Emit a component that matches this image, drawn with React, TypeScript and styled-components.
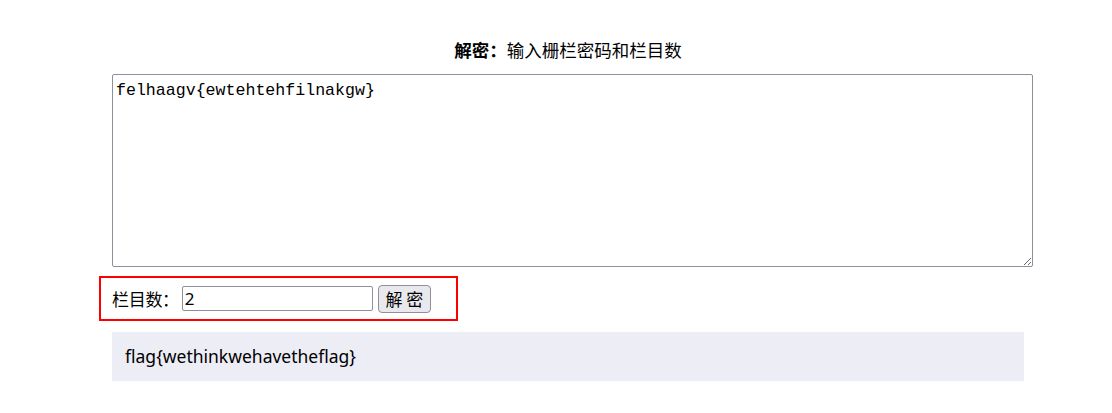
import React from "react";
import styled, { createGlobalStyle } from "styled-components";

const Global = createGlobalStyle`
  html, body { margin: 0; padding: 0; background: #fff; }
  body { font-family: "Noto Sans", "Noto Sans CJK SC", sans-serif; color: #000; }
`;

const Page = styled.div`
  padding: 38px 0 0 112px;
  width: 912px;
`;

const Title = styled.div`
  text-align: center;
  font-family: "Noto Sans CJK SC", sans-serif;
  font-size: 17.5px;
  line-height: 24px;
  height: 24px;
`;

const Strong = styled.b`
  font-weight: 700;
`;

const Area = styled.textarea`
  display: block;
  box-sizing: border-box;
  margin-top: 12px;
  width: 921px;
  height: 193px;
  border: 1px solid #8f8f9d;
  border-radius: 2px;
  padding: 6px 3px 4px;
  font-family: "Liberation Mono", monospace;
  font-size: 16.6px;
  line-height: 20px;
  color: #000;
  resize: both;
  outline: none;
`;

const Row = styled.div`
  display: flex;
  align-items: center;
  box-sizing: border-box;
  margin: 9px 0 0 -13px;
  width: 359px;
  height: 45px;
  border: 2px solid #ff0000;
  padding: 0 11px;
  gap: 3px;
`;

const Label = styled.span`
  font-family: "Noto Sans CJK SC", sans-serif;
  font-size: 17px;
  line-height: 24px;
  letter-spacing: -0.3px;
`;

const NumInput = styled.input`
  box-sizing: border-box;
  width: 191px;
  height: 25px;
  border: 1px solid #8f8f9d;
  border-radius: 2px;
  padding: 0 2px;
  font-family: "Noto Sans", sans-serif;
  font-size: 17px;
  color: #000;
  outline: none;
`;

const Btn = styled.button`
  box-sizing: border-box;
  width: 53px;
  height: 28px;
  margin-left: 2px;
  border: 1px solid #8f8f9d;
  border-radius: 4px;
  background: #e9e9ed;
  font-family: "Noto Sans CJK SC", sans-serif;
  font-size: 17px;
  line-height: 24px;
  padding: 0;
  color: #000;
`;

const Result = styled.div`
  box-sizing: border-box;
  margin-top: 11px;
  width: 912px;
  height: 49px;
  background: #ededf6;
  padding-left: 13px;
  font-family: "Noto Sans", sans-serif;
  font-size: 17.5px;
  line-height: 49px;
`;

export default function App() {
  return (
    <>
      <Global />
      <Page>
        <Title>
          <Strong>解密：</Strong>输入栅栏密码和栏目数
        </Title>
        <Area defaultValue="felhaagv{ewtehtehfilnakgw}" />
        <Row>
          <Label>栏目数：</Label>
          <NumInput defaultValue="2" />
          <Btn>解 密</Btn>
        </Row>
        <Result>flag{"{"}wethinkwehavetheflag{"}"}</Result>
      </Page>
    </>
  );
}
